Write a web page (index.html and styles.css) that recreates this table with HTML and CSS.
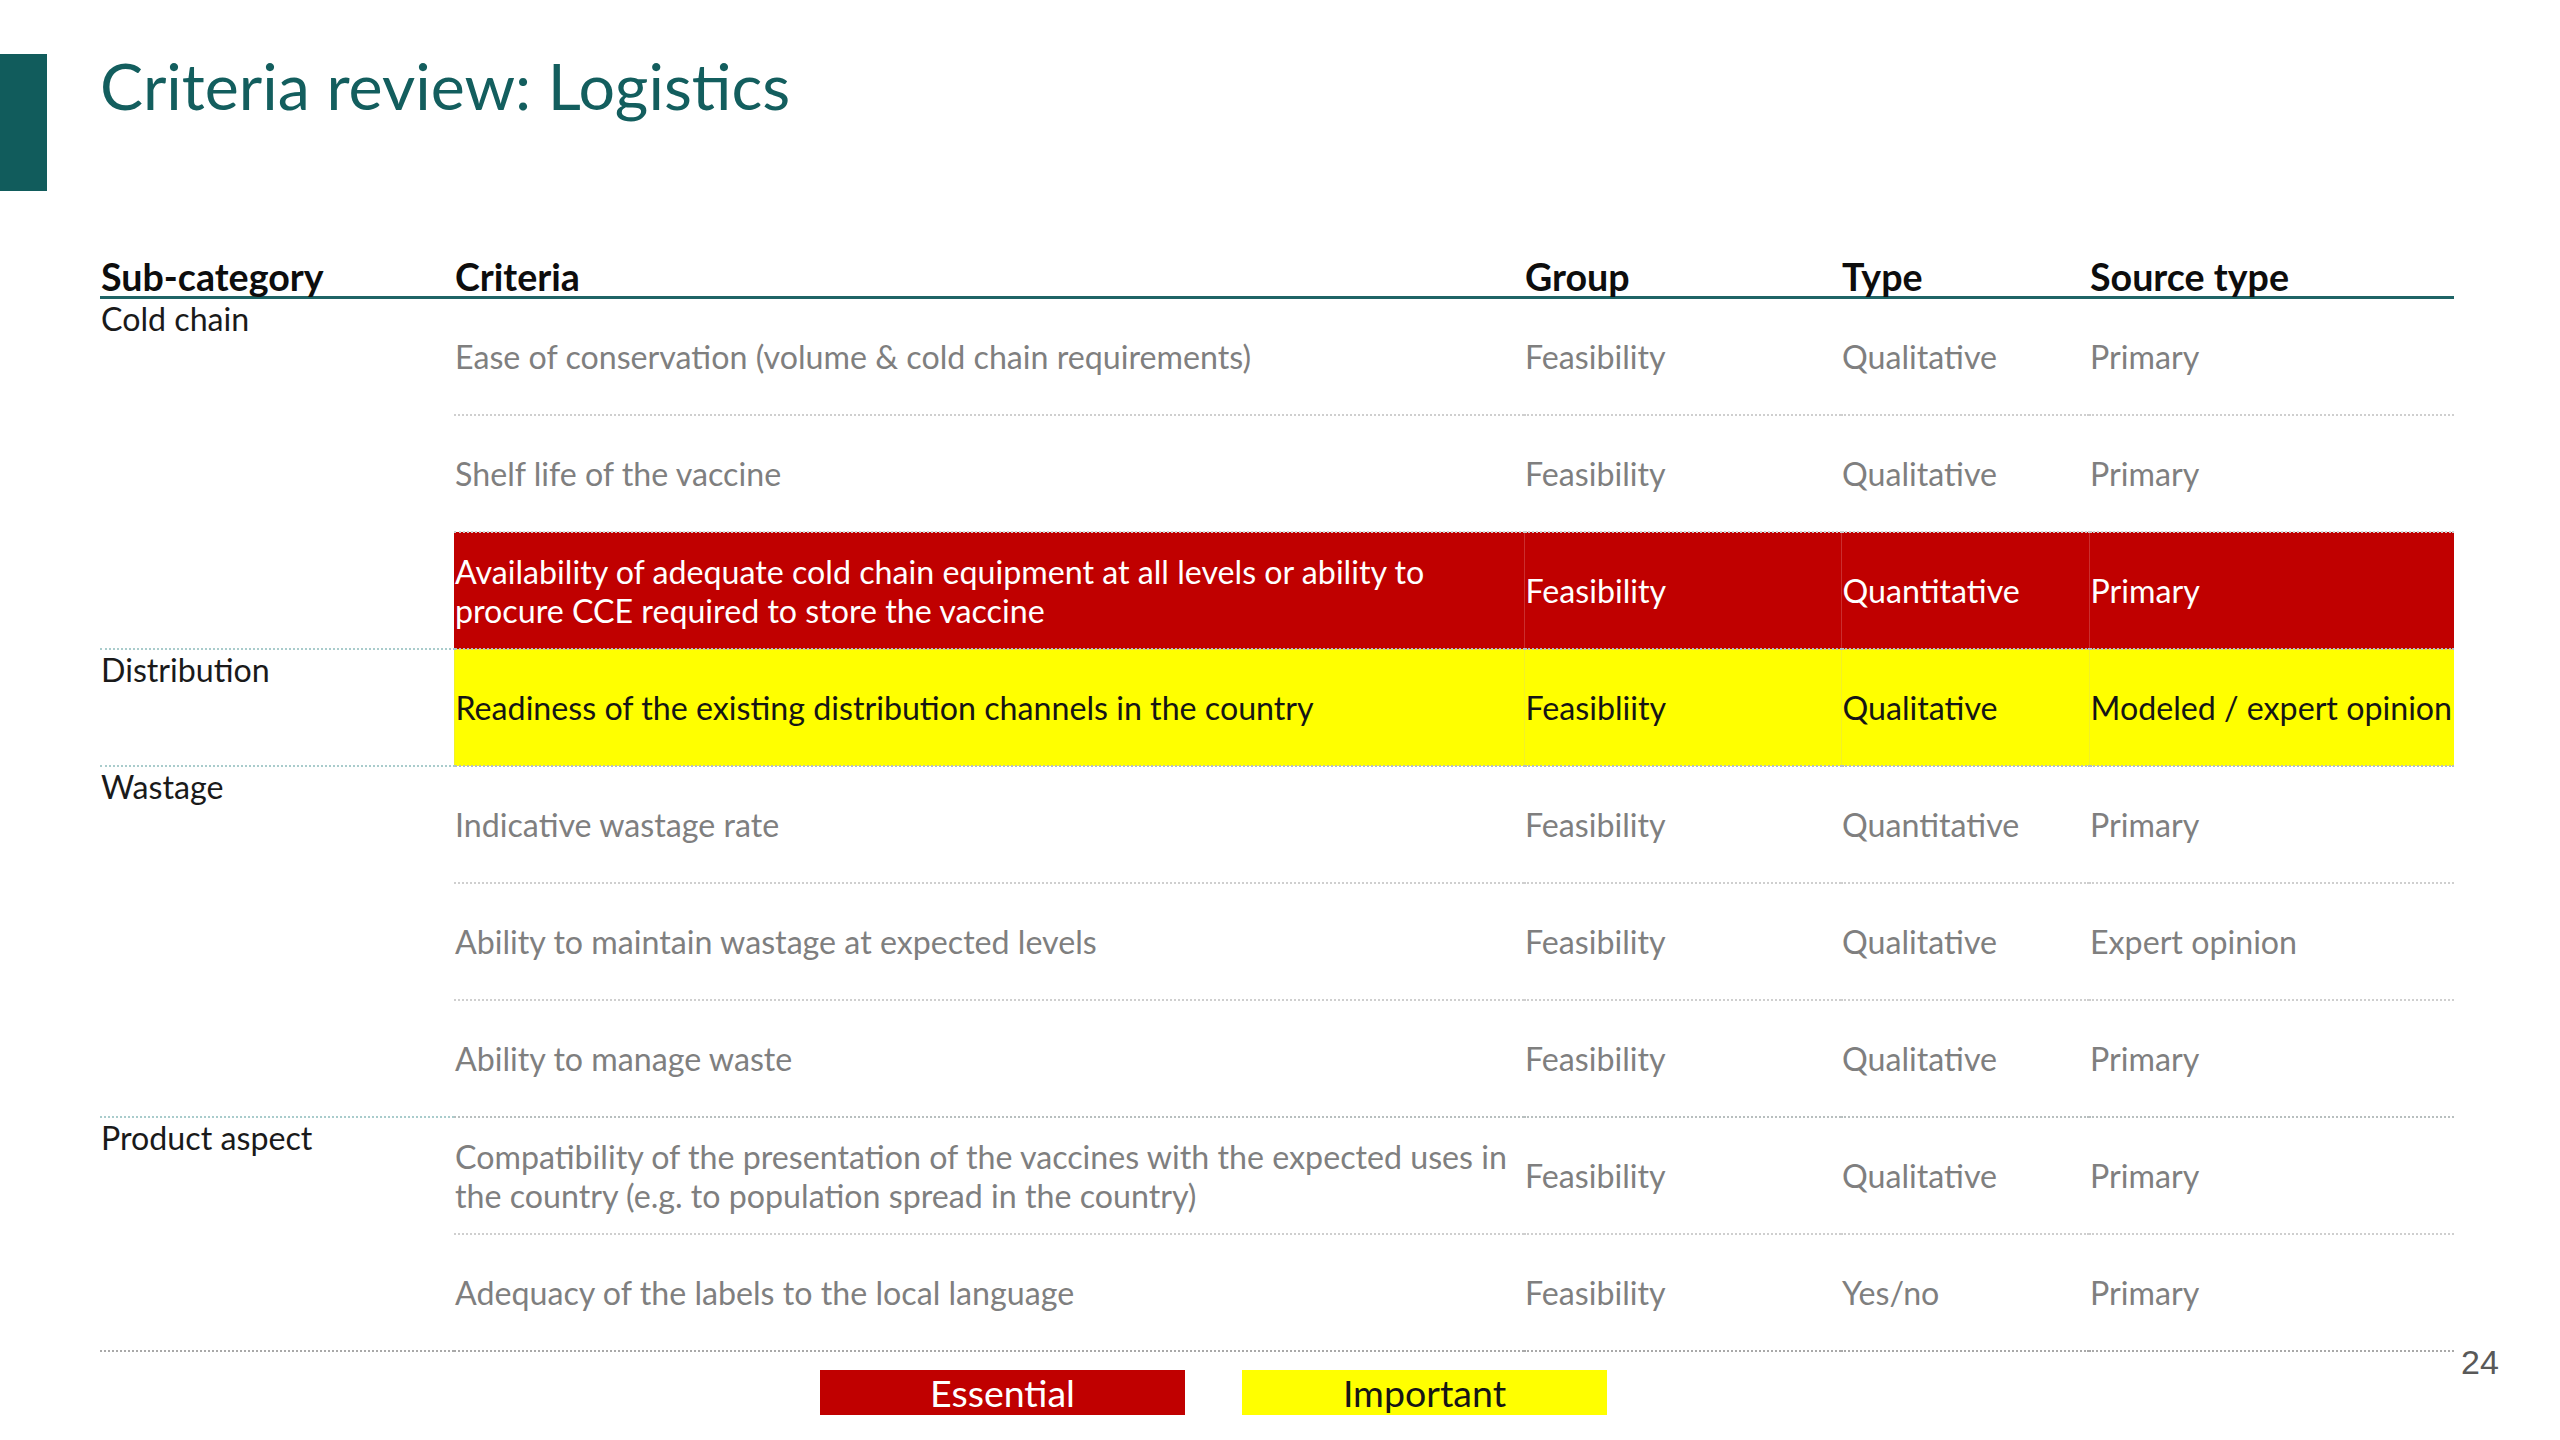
FILE: index.html
```html
<!DOCTYPE html>
<html lang="en">
<head>
<meta charset="utf-8">
<title>Criteria review: Logistics</title>
<link rel="stylesheet" href="styles.css">
</head>
<body>
<div class="slide">
  <header class="head">
    <div class="accent"></div>
    <h1 class="title">Criteria review: Logistics</h1>
  </header>

  <table class="crit">
    <colgroup>
      <col class="c-sub"><col class="c-crit"><col class="c-group"><col class="c-type"><col class="c-src">
    </colgroup>
    <thead>
      <tr>
        <th>Sub-category</th><th>Criteria</th><th>Group</th><th>Type</th><th>Source type</th>
      </tr>
    </thead>
    <tbody>
      <tr class="in">
        <td class="sub grp" rowspan="3">Cold chain</td>
        <td>Ease of conservation (volume &amp; cold chain requirements)</td><td>Feasibility</td><td>Qualitative</td><td>Primary</td>
      </tr>
      <tr class="in">
        <td>Shelf life of the vaccine</td><td>Feasibility</td><td>Qualitative</td><td>Primary</td>
      </tr>
      <tr class="essential last">
        <td>Availability of adequate cold chain equipment at all levels or ability to procure CCE required to store the vaccine</td><td>Feasibility</td><td>Quantitative</td><td>Primary</td>
      </tr>
      <tr class="important last">
        <td class="sub grp">Distribution</td>
        <td>Readiness of the existing distribution channels in the country</td><td>Feasibliity</td><td>Qualitative</td><td>Modeled / expert opinion</td>
      </tr>
      <tr class="in">
        <td class="sub grp" rowspan="3">Wastage</td>
        <td>Indicative wastage rate</td><td>Feasibility</td><td>Quantitative</td><td>Primary</td>
      </tr>
      <tr class="in">
        <td>Ability to maintain wastage at expected levels</td><td>Feasibility</td><td>Qualitative</td><td>Expert opinion</td>
      </tr>
      <tr class="last">
        <td>Ability to manage waste</td><td>Feasibility</td><td>Qualitative</td><td>Primary</td>
      </tr>
      <tr class="in">
        <td class="sub grp end" rowspan="2">Product aspect</td>
        <td>Compatibility of the presentation of the vaccines with the expected uses in the country (e.g. to population spread in the country)</td><td>Feasibility</td><td>Qualitative</td><td>Primary</td>
      </tr>
      <tr class="last end">
        <td>Adequacy of the labels to the local language</td><td>Feasibility</td><td>Yes/no</td><td>Primary</td>
      </tr>
    </tbody>
  </table>

  <div class="foot">
    <div class="legend">
      <span class="key key-ess">Essential</span>
      <span class="key key-imp">Important</span>
    </div>
    <span class="pageno">24</span>
  </div>
</div>
</body>
</html>
```

FILE: styles.css
```css
html, body {
  margin: 0;
  padding: 0;
  background: #ffffff;
}

.slide {
  width: 2560px;
  height: 1440px;
  position: relative;
  overflow: hidden;
  font-family: Lato, "Open Sans", sans-serif;
  color: #7f7f7f;
}

.head {
  display: flex;
  align-items: flex-start;
  height: 257px;
}

.accent {
  width: 47px;
  height: 137px;
  margin-top: 54px;
  background: #115c5c;
  flex: none;
}

.title {
  margin: 47px 0 0 53px;
  font-weight: 400;
  font-size: 64.5px;
  line-height: 76px;
  color: #135e5e;
  letter-spacing: 0;
}

.crit {
  margin-left: 100px;
  width: 2354px;
  border-collapse: collapse;
  table-layout: fixed;
  font-size: 32.2px;
  line-height: 39px;
}

.c-sub { width: 354px; }
.c-crit { width: 1070px; }
.c-group { width: 317px; }
.c-type { width: 248px; }
.c-src { width: 365px; }

.crit th {
  text-align: left;
  font-weight: 700;
  font-size: 37.6px;
  line-height: 38px;
  color: #0d0d0d;
  padding: 0 0 0 1px;
  height: 39px;
  vertical-align: bottom;
  border-bottom: 3px solid #1f6466;
}

.crit td {
  padding: 0 0 0 1px;
  height: 115px;
  vertical-align: middle;
  text-align: left;
}

.crit tr.in td {
  border-bottom: 2px dotted #cfcfcf;
}

.crit tr.last td {
  border-bottom: 2px dotted #b8bfbf;
}

.crit tr.end td {
  border-bottom: 2px dotted #a9a9a9;
}

.crit td.sub {
  vertical-align: top;
  color: #1a1a1a;
  padding-top: 0;
}

.crit td.grp {
  border-bottom: 2px dotted #a9cccc !important;
  background: #ffffff !important;
  color: #1a1a1a !important;
}

.crit td.grp.end {
  border-bottom: 2px dotted #a9a9a9 !important;
}

.crit tr.essential td {
  background: #c00000;
  color: #ffffff;
  border-right: 1px solid rgba(255, 255, 255, 0.18);
}

.crit tr.important td {
  background: #ffff00;
  color: #151515;
  border-right: 1px solid rgba(200, 200, 160, 0.25);
}

.crit tr.essential td:last-child,
.crit tr.important td:last-child {
  border-right: none;
}

.foot {
  display: flex;
  position: relative;
  width: 2560px;
}

.legend {
  display: flex;
  gap: 57px;
  margin: 18px 0 0 820px;
}

.key {
  display: block;
  width: 365px;
  height: 45px;
  line-height: 45px;
  text-align: center;
  font-size: 37.5px;
}

.key-ess {
  background: #c00000;
  color: #ffffff;
}

.key-imp {
  background: #ffff00;
  color: #151515;
}

.pageno {
  position: absolute;
  left: 2461px;
  top: -9px;
  font-family: "Liberation Sans", Arial, sans-serif;
  font-size: 34px;
  color: #595959;
}
```
